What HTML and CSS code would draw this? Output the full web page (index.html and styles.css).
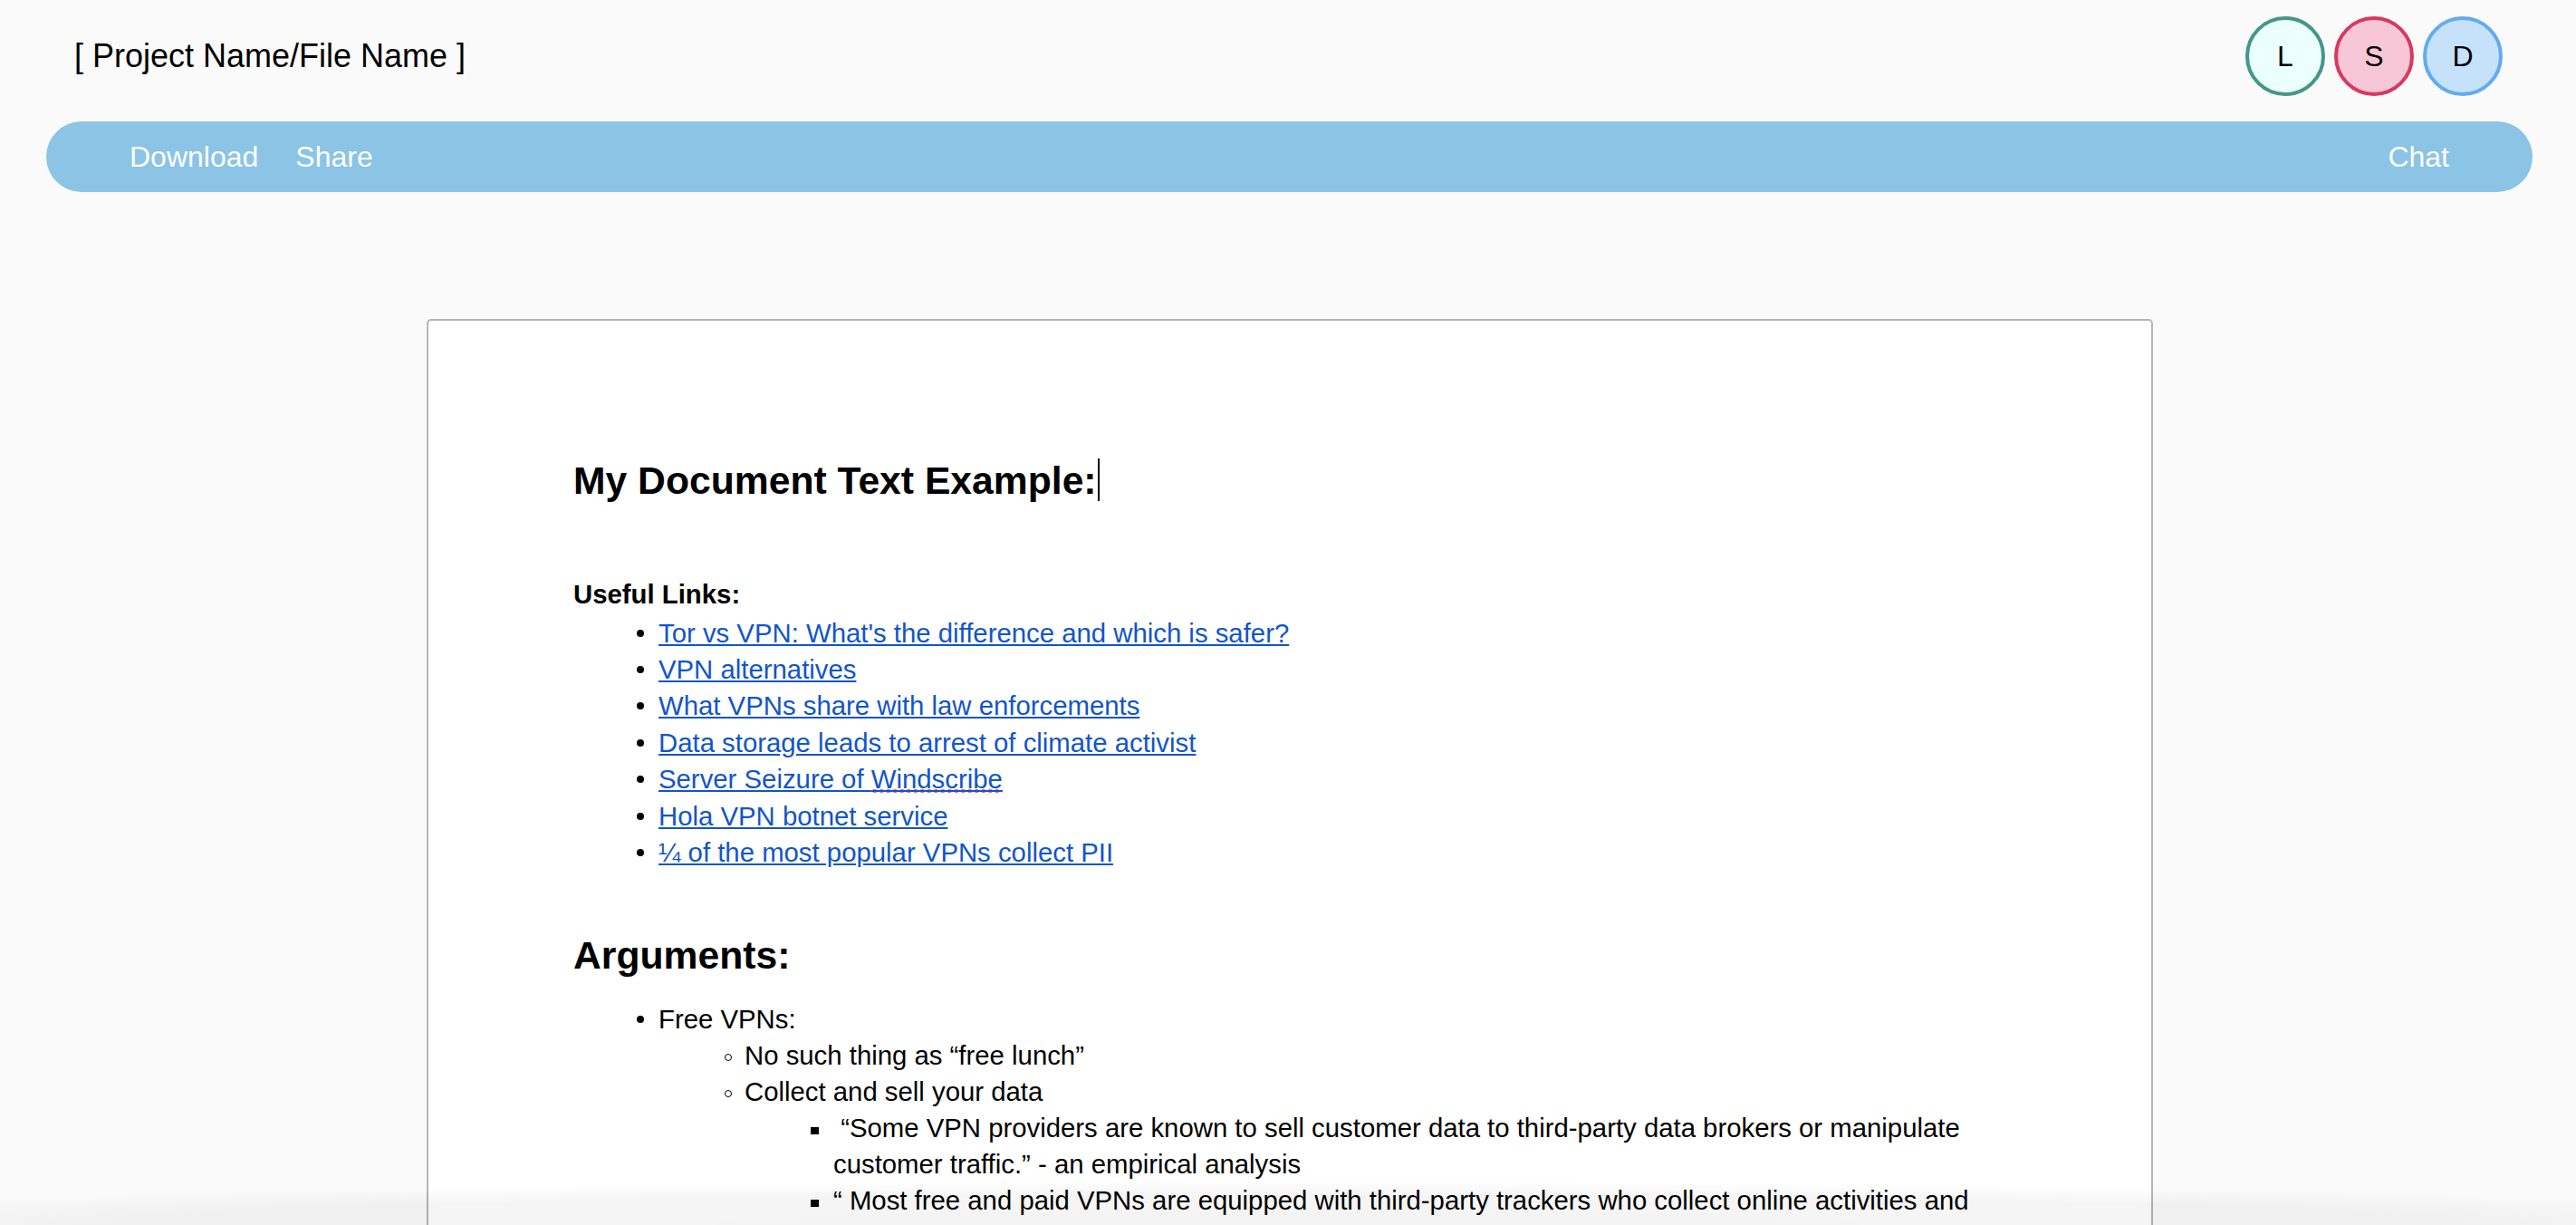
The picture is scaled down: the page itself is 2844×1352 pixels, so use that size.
FILE: index.html
```html
<!DOCTYPE html>
<html lang="en">
<head>
<meta charset="utf-8">
<title>[ Project Name/File Name ]</title>
<link rel="stylesheet" href="styles.css">
</head>
<body>
<header class="topbar">
  <div class="project-name">[ Project Name/File Name ]</div>
  <div class="avatars">
    <div class="avatar avatar-l">L</div>
    <div class="avatar avatar-s">S</div>
    <div class="avatar avatar-d">D</div>
  </div>
</header>

<nav class="toolbar">
  <div class="toolbar-group">
    <a class="tb-link" href="#">Download</a>
    <a class="tb-link" href="#">Share</a>
  </div>
  <a class="tb-link" href="#">Chat</a>
</nav>

<main class="doc-area">
  <article class="doc">
    <h1 class="doc-heading">My Document Text Example:<span class="caret"></span></h1>

    <p class="doc-label">Useful Links:</p>
    <ul class="list lvl1 links">
      <li><a href="#">Tor vs VPN: What's the difference and which is safer?</a></li>
      <li><a href="#">VPN alternatives</a></li>
      <li><a href="#">What VPNs share with law enforcements</a></li>
      <li><a href="#">Data storage leads to arrest of climate activist</a></li>
      <li><a href="#">Server Seizure of <span class="spell">Windscribe</span></a></li>
      <li><a href="#">Hola VPN botnet service</a></li>
      <li><a href="#">¼ of the most popular VPNs collect PII</a></li>
    </ul>

    <h2 class="doc-heading doc-heading-2">Arguments:</h2>
    <ul class="list lvl1 args">
      <li>Free VPNs:
        <ul class="list lvl2">
          <li>No such thing as “free lunch”</li>
          <li>Collect and sell your data
            <ul class="list lvl3">
              <li>&nbsp;“Some VPN providers are known to sell customer data to third-party data brokers or manipulate customer traffic.” - an empirical analysis</li>
              <li>“ Most free and paid VPNs are equipped with third-party trackers who collect online activities and share them with advertisers.”</li>
            </ul>
          </li>
        </ul>
      </li>
    </ul>
  </article>
</main>

<div class="bottom-fade"></div>
</body>
</html>
```

FILE: styles.css
```css
html, body {
  margin: 0;
  padding: 0;
}

body {
  background: #fafafa;
  font-family: "Liberation Sans", Arial, sans-serif;
  color: #000;
}

/* ---------- Top bar ---------- */
.topbar {
  display: flex;
  justify-content: space-between;
  align-items: center;
  padding: 18px 81px 0 82px;
}

.project-name {
  font-size: 36px;
}

.avatars {
  display: flex;
  gap: 10px;
}

.avatar {
  width: 88px;
  height: 88px;
  box-sizing: border-box;
  border: 4px solid;
  border-radius: 50%;
  display: flex;
  align-items: center;
  justify-content: center;
  font-size: 32px;
}

.avatar-l {
  background: #ebfffd;
  border-color: #45968a;
}

.avatar-s {
  background: #f7c7d8;
  border-color: #d8385f;
}

.avatar-d {
  background: #c6e2fb;
  border-color: #62abf2;
}

/* ---------- Toolbar ---------- */
.toolbar {
  display: flex;
  justify-content: space-between;
  align-items: center;
  height: 78px;
  margin: 28px 48px 0 51px;
  padding: 0 92px;
  background: #8bc4e4;
  border-radius: 39px;
}

.toolbar-group {
  display: flex;
  gap: 41px;
}

.tb-link {
  color: #fff;
  font-size: 32px;
  text-decoration: none;
}

/* ---------- Document ---------- */
.doc-area {
  padding: 140px 0 0 4px;
}

.doc {
  width: 1906px;
  box-sizing: border-box;
  margin: 0 auto;
  background: #fff;
  border: 2px solid #b5b5b5;
  border-radius: 5px;
  padding: 148px 160px 240px 160px;
  font-size: 29.33px;
}

.doc-heading {
  margin: 0;
  font-size: 42.67px;
  font-weight: bold;
  line-height: 56px;
}

.doc-heading-2 {
  margin-top: 64.5px;
}

.caret {
  display: inline-block;
  width: 2px;
  height: 47px;
  margin-left: 1.5px;
  background: #000;
  vertical-align: -8px;
}

.doc-label {
  margin: 78px 0 0;
  font-weight: bold;
  line-height: 40.4px;
}

.list {
  list-style: none;
  margin: 0;
  padding: 0;
}

.links {
  margin: 2.2px 0 0 70px;
  line-height: 40.4px;
}

.args {
  margin: 23.3px 0 0 70px;
  line-height: 40px;
}

.lvl1 > li {
  padding-left: 24px;
}

.lvl1 > li::before {
  content: "";
  display: inline-block;
  width: 8px;
  height: 8px;
  margin-left: -24px;
  margin-right: 16px;
  border-radius: 50%;
  background: #000;
  vertical-align: 6px;
}

.lvl2 {
  margin-left: 73px;
}

.lvl2 > li {
  padding-left: 22px;
}

.lvl2 > li::before {
  content: "";
  display: inline-block;
  width: 8px;
  height: 8px;
  box-sizing: border-box;
  margin-left: -22px;
  margin-right: 14px;
  border: 1px solid #000;
  border-radius: 50%;
  vertical-align: 4.5px;
}

.lvl3 {
  margin-left: 73px;
}

.lvl3 > li {
  padding-left: 25px;
}

.lvl3 > li::before {
  content: "";
  display: inline-block;
  width: 9px;
  height: 8px;
  margin-left: -25px;
  margin-right: 16px;
  background: #000;
  vertical-align: 3px;
}

.links a {
  color: #1155cc;
  text-decoration: underline;
}

.spell {
  background-image: radial-gradient(circle, #ec716c 2.1px, rgba(236, 113, 108, 0) 2.6px);
  background-size: 7.5px 6px;
  background-repeat: repeat-x;
  background-position: 0 100%;
}

/* ---------- Bottom shadow of the viewport ---------- */
.bottom-fade {
  position: fixed;
  left: 0;
  right: 0;
  bottom: 0;
  height: 48px;
  pointer-events: none;
  background: radial-gradient(ellipse 1800px 48px at 50% 100%,
    rgba(0, 0, 0, 0.045) 0%,
    rgba(0, 0, 0, 0.038) 70%,
    rgba(0, 0, 0, 0) 100%);
}
```
